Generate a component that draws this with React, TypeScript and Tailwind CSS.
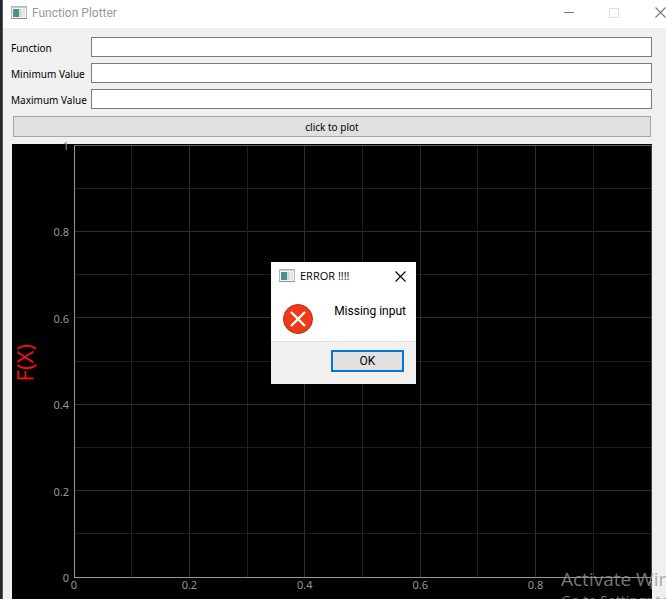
import React from "react";

const TICKS = [0, 1, 2, 3, 4, 5, 6, 7, 8, 9, 10];
const FIELDS = [
  { id: "function", label: "Function" },
  { id: "minimum", label: "Minimum Value" },
  { id: "maximum", label: "Maximum Value" },
];

function AppIcon() {
  return (
    <svg className="h-[14px] w-[16px] shrink-0" viewBox="0 0 16 14" aria-hidden="true">
      <defs>
        <linearGradient id="pane" x1="0" y1="0" x2="1" y2="1">
          <stop offset="0" stopColor="#4a8fa8" />
          <stop offset="1" stopColor="#4c9270" />
        </linearGradient>
      </defs>
      <rect x="0.5" y="0.5" width="15" height="12" fill="#f5f5f5" stroke="#b3b8bd" />
      <rect x="1" y="1" width="14" height="1" fill="#c3ccd4" />
      <rect x="2" y="3" width="6" height="8" fill="url(#pane)" />
      <rect x="8" y="3" width="3" height="8" fill="#d3dedb" />
      <rect x="12" y="3" width="2" height="8" fill="#e2e2e2" />
      <rect x="0" y="12" width="16" height="1" fill="#8d9298" />
    </svg>
  );
}

function CloseGlyph() {
  return (
    <svg className="h-[11px] w-[11px] shrink-0" viewBox="0 0 11 11" aria-hidden="true">
      <path d="M0.5 0.5L10.5 10.5M10.5 0.5L0.5 10.5" stroke="currentColor" strokeWidth="1.1" fill="none" />
    </svg>
  );
}

function Plot() {
  return (
    <div className="flex bg-black pt-px pb-[22px] pr-px">
      <div className="flex w-[62px] shrink-0 items-center pt-1">
        <span className="w-6 rotate-180 text-center text-[22px] leading-6 text-[#f01010] [writing-mode:vertical-rl]">
          F(X)
        </span>
      </div>
      <svg className="h-[432px] min-w-0 flex-1 overflow-visible" aria-label="Plot">
        <g shapeRendering="crispEdges">
          {TICKS.map((i) => (
            <g key={i} stroke={i % 2 ? "#1f1f1f" : "#2e2e2e"}>
              <line x1={`${i * 10}%`} x2={`${i * 10}%`} y1="0" y2="100%" />
              <line x1="0" x2="100%" y1={`${i * 10}%`} y2={`${i * 10}%`} />
            </g>
          ))}
          <line x1="0" x2="100%" y1="0" y2="0" stroke="#606060" />
          <line x1="100%" x2="100%" y1="0" y2="100%" stroke="#404040" />
          <line x1="0" x2="0" y1="0" y2="100%" stroke="#969696" />
          <line x1="0" x2="100%" y1="100%" y2="100%" stroke="#969696" />
        </g>
        <g fill="#969696" className="text-[11px]">
          {TICKS.filter((i) => i % 2 === 0).map((i) => (
            <g key={i}>
              <text x={`${i * 10}%`} y="100%" dy="12" textAnchor="middle">
                {i / 10}
              </text>
              <text x="-5" y={`${100 - i * 10}%`} dy="5" textAnchor="end">
                {i / 10}
              </text>
            </g>
          ))}
        </g>
      </svg>
    </div>
  );
}

function ErrorDialog() {
  return (
    <div
      role="alertdialog"
      aria-label="ERROR !!!!"
      className="absolute top-[262px] left-[271px] w-[145px] bg-white font-['Roboto',sans-serif] text-[12px] text-black"
    >
      <div className="flex h-7 items-center pr-[10px] pl-2">
        <AppIcon />
        <span className="ml-[5px] flex-1 whitespace-nowrap font-['Open_Sans',sans-serif] text-[11px]">ERROR !!!!</span>
        <button type="button" aria-label="Close" className="flex">
          <CloseGlyph />
        </button>
      </div>
      <div className="flex h-[51px] items-start justify-between pt-3 pr-[10px] pl-3">
        <svg className="mt-[2px] h-[30px] w-[30px]" viewBox="0 0 30 30" aria-hidden="true">
          <circle cx="15" cy="15" r="14.5" fill="#ee3a16" stroke="#b83018" />
          <path d="M8 8L22 22M22 8L8 22" stroke="#fff" strokeWidth="2.4" />
        </svg>
        <p className="whitespace-nowrap leading-[18px]">Missing input</p>
      </div>
      <div className="flex h-[43px] items-start justify-end border-t border-[#dfdfdf] bg-[#f0f0f0] pt-2 pr-3">
        <button type="button" className="h-[22px] w-[73px] border-2 border-[#0078d7] bg-[#e1e1e1] leading-[18px]">
          OK
        </button>
      </div>
    </div>
  );
}

export default function App() {
  return (
    <div className="relative flex min-h-screen overflow-hidden bg-[#f0f0f0] font-['Noto_Sans','Open_Sans',sans-serif]">
      <div className="w-[3px] shrink-0 border-r border-[#555555] bg-[#27262b]" />
      <main className="min-w-0 flex-1">
        <header className="flex h-7 items-center overflow-hidden bg-white pb-[3px] pl-2 text-[#999999]">
          <AppIcon />
          <h1 className="ml-[5px] flex-1 font-['Roboto',sans-serif] text-[12px]">Function Plotter</h1>
          <button type="button" aria-label="Minimize" className="mr-[35px] h-px w-[10px] bg-[#777777]" />
          <button type="button" aria-label="Maximize" disabled className="mr-9 h-[10px] w-[10px] border border-[#e2e2e2]" />
          <button type="button" aria-label="Close" className="flex text-[#777777]">
            <CloseGlyph />
          </button>
        </header>
        <form className="pt-[9px] pr-[14px] pl-[9px]" onSubmit={(e) => e.preventDefault()}>
          <div className="grid grid-cols-[79px_1fr] gap-y-[6px]">
            {FIELDS.map(({ id, label }) => (
              <React.Fragment key={id}>
                <label htmlFor={id} className="-ml-px whitespace-nowrap pt-[2px] text-[10px] leading-[18px] text-black">
                  {label}
                </label>
                <input id={id} type="text" className="h-5 w-full min-w-0 border border-[#7a7a7a] bg-white px-1 text-[10px]" />
              </React.Fragment>
            ))}
          </div>
          <div className="px-px pt-[7px] pb-[7px]">
            <button type="submit" className="block h-[21px] w-full border border-[#a5a5a5] bg-[#dfe0e2] text-[10px] leading-[18px]">
              click to plot
            </button>
          </div>
          <Plot />
        </form>
      </main>
      <ErrorDialog />
      <div className="pointer-events-none absolute top-[566px] left-[561px] whitespace-nowrap text-[#969696]/80 font-['Open_Sans',sans-serif]">
        <p className="text-[19px] leading-[26px]">Activate Windows</p>
        <p className="text-[14px] leading-[18px]">Go to Settings to activate Windows.</p>
      </div>
    </div>
  );
}
